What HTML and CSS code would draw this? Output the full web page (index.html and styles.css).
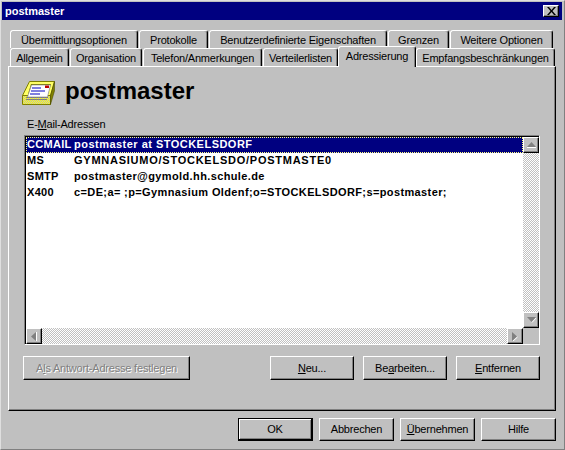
FILE: index.html
```html
<!DOCTYPE html>
<html lang="de">
<head>
<meta charset="utf-8">
<title>postmaster</title>
<link rel="stylesheet" href="styles.css">
</head>
<body>
<div class="window">
  <header class="titlebar">
    <span class="title">postmaster</span>
    <button class="close" aria-label="Schließen"><svg width="9" height="8" viewBox="0 0 9 8"><path d="M0 0h2l2.500 3L7 0h2L5.500 4 9 8H7L4.500 5 2 8H0l3.500-4z" fill="#000"/></svg></button>
  </header>
  <div class="tabs">
    <div class="tab-row">
      <div class="tab w128">Übermittlungsoptionen</div>
      <div class="tab w69">Protokolle</div>
      <div class="tab w178">Benutzerdefinierte Eigenschaften</div>
      <div class="tab w61">Grenzen</div>
      <div class="tab w103">Weitere Optionen</div>
    </div>
    <div class="tab-row">
      <div class="tab w59">Allgemein</div>
      <div class="tab w72">Organisation</div>
      <div class="tab w119">Telefon/Anmerkungen</div>
      <div class="tab w75">Verteilerlisten</div>
      <div class="tab tab-active">Adressierung</div>
      <div class="tab w139">Empfangsbeschränkungen</div>
    </div>
  </div>
  <main class="panel">
    <div class="heading">
      <svg class="mailbox" width="34" height="26" viewBox="0 0 34 26">
        <defs>
          <pattern id="dither" width="2" height="2" patternUnits="userSpaceOnUse">
            <rect width="2" height="2" fill="#ffff00"/>
            <rect width="1" height="1" fill="#c0c0c0"/>
            <rect x="1" y="1" width="1" height="1" fill="#c0c0c0"/>
          </pattern>
        </defs>
        <path d="M8.500 1.500H33.500L29.500 15.500H1.500z" fill="#ffff66" stroke="#808000"/>
        <path d="M1.500 15.500H29.500V24.500H1.500z" fill="url(#dither)" stroke="#808000"/>
        <path d="M29.500 15.500L33.500 1.500V11L29.500 24.500z" fill="#808000" stroke="#404000" stroke-width=".5"/>
        <path d="M10 4H30L27 14H7z" fill="#808000"/>
        <path d="M10.500 5H29.500L26.500 17H6.500z" fill="#fff" stroke="#808080" stroke-width=".6"/>
        <path d="M11 8H20M10 11H24M9 14H19" stroke="#0000c0" stroke-width="1.200"/>
        <path d="M24 5.500H28V8H24z" fill="#c00000"/>
        <path d="M5 17.500H27M5 19.500H26" stroke="#808080"/>
      </svg>
      <h1 class="name">postmaster</h1>
    </div>
    <label class="list-label">E-<u>M</u>ail-Adressen</label>
    <div class="listbox">
      <div class="list-main">
        <div class="list-rows">
          <div class="row row-selected"><span class="kind">CCMAIL</span><span>postmaster at STOCKELSDORF</span></div>
          <div class="row row-upper"><span class="kind">MS</span><span>GYMNASIUMO/STOCKELSDO/POSTMASTE0</span></div>
          <div class="row"><span class="kind">SMTP</span><span>postmaster@gymold.hh.schule.de</span></div>
          <div class="row"><span class="kind">X400</span><span>c=DE;a= ;p=Gymnasium Oldenf;o=STOCKELSDORF;s=postmaster;</span></div>
        </div>
        <div class="vscroll">
          <div class="sbtn"><svg width="9" height="6" viewBox="0 0 9 6"><path d="M4.500 0L9 5H0z" fill="#808080"/><path d="M0 5.500H9" stroke="#fff"/></svg></div>
          <div class="track"></div>
          <div class="sbtn"><svg width="9" height="6" viewBox="0 0 9 6"><path d="M0 0H9L4.500 5z" fill="#808080"/><path d="M5 5.500L9 1" stroke="#fff"/></svg></div>
        </div>
      </div>
      <div class="hscroll">
        <div class="sbtn"><svg width="6" height="9" viewBox="0 0 6 9"><path d="M0 4.500L5 0V9z" fill="#808080"/><path d="M5.500 0V9" stroke="#fff"/></svg></div>
        <div class="track"></div>
        <div class="sbtn"><svg width="6" height="9" viewBox="0 0 6 9"><path d="M0 0L5 4.500 0 9z" fill="#808080"/><path d="M1 9L5.500 5" stroke="#fff"/></svg></div>
        <div class="corner"></div>
      </div>
    </div>
    <div class="actions">
      <button class="btn btn-wide" disabled>A<u>l</u>s Antwort-Adresse festlegen</button>
      <div class="actions-right">
        <button class="btn btn-action"><u>N</u>eu...</button>
        <button class="btn btn-action">Be<u>a</u>rbeiten...</button>
        <button class="btn btn-action"><u>E</u>ntfernen</button>
      </div>
    </div>
  </main>
  <footer class="footer">
    <button class="btn btn-foot btn-default">OK</button>
    <button class="btn btn-foot">Abbrechen</button>
    <button class="btn btn-foot"><u>Ü</u>bernehmen</button>
    <button class="btn btn-foot">Hilfe</button>
  </footer>
</div>
</body>
</html>
```

FILE: styles.css
```css
* { box-sizing: border-box; }
html, body { margin: 0; padding: 0; }
body {
  width: 565px;
  height: 450px;
  overflow: hidden;
  background: #c0c0c0;
  font: 11px/13px "Liberation Sans", Arial, sans-serif;
  color: #000;
}
u { text-decoration: underline; }
.window {
  width: 565px;
  height: 450px;
  display: flex;
  flex-direction: column;
  padding: 1px 2px 0 1px;
  border: 1px solid;
  border-color: #dfdfdf #808080 #808080 #dfdfdf;
}
.titlebar {
  height: 18px;
  flex: none;
  background: #000080;
  color: #fff;
  display: flex;
  align-items: center;
  justify-content: space-between;
  padding: 0 3px 0 3px;
}
.title { font-weight: 700; font-size: 11px; }
.close {
  width: 16px;
  height: 12px;
  padding: 0;
  background: #c0c0c0;
  border: 1px solid;
  border-color: #fff #000 #000 #fff;
  box-shadow: inset -1px -1px 0 #808080;
  display: flex;
  align-items: center;
  justify-content: center;
}
.tabs {
  flex: none;
  margin-top: 10px;
  height: 36px;
  letter-spacing: -.2px;
}
.tab-row { display: flex; height: 18px; padding-left: 8px; gap: 1px; }
.tab {
  height: 18px;
  flex: none;
  display: flex;
  align-items: center;
  justify-content: center;
  background: #c0c0c0;
  border: 1px solid;
  border-bottom: 0;
  border-color: #fff #000 transparent #fff;
  border-radius: 3px 3px 0 0;
  box-shadow: inset -1px 0 0 #808080;
  padding-top: 1px;
}
.w128 { width: 128px; }
.w69 { width: 69px; }
.w178 { width: 178px; }
.w61 { width: 61px; }
.w103 { width: 103px; }
.w59 { width: 59px; }
.w72 { width: 72px; }
.w119 { width: 119px; }
.w75 { width: 75px; margin-right: -1px; }
.w139 { width: 139px; margin-left: -1px; }
.tab-active {
  width: 78px;
  height: 21px;
  margin-top: -2px;
  position: relative;
  z-index: 2;
  padding-bottom: 3px;
}
.panel {
  margin-left: 6px;
  width: 548px;
  height: 345px;
  flex: none;
  background: #c0c0c0;
  border: 1px solid;
  border-color: #fff #000 #000 #fff;
  box-shadow: inset -1px -1px 0 #808080;
  padding: 11px 0 0 15px;
  display: flex;
  flex-direction: column;
}
.heading { display: flex; align-items: center; gap: 10px; height: 28px; margin-left: -3px; }
.mailbox { flex: none; margin-top: 1px; }
.name { margin: -3px 0 0; font: 700 24px/28px "Liberation Sans", Arial, sans-serif; }
.list-label { display: block; margin: 12px 0 0 3px; height: 14px; letter-spacing: -.2px; }
.listbox {
  margin-top: 3px;
  width: 516px;
  height: 210px;
  background: #fff;
  border: 1px solid;
  border-color: #808080 #fff #fff #808080;
  box-shadow: inset 1px 1px 0 #000;
  padding: 1px 0 0 1px;
  display: flex;
  flex-direction: column;
}
.list-main { flex: 1; display: flex; min-height: 0; }
.list-rows { flex: 1; font-weight: 700; letter-spacing: .38px; }
.row { height: 16px; display: flex; line-height: 15px; padding-left: 1px; }
.row-upper { letter-spacing: .75px; }
.row-selected {
  background: #000080;
  color: #fff;
  outline: 1px dotted #ffff80;
  outline-offset: -1px;
  letter-spacing: .48px;
}
.kind { width: 47px; flex: none; letter-spacing: .3px; }
.vscroll { width: 16px; flex: none; display: flex; flex-direction: column; }
.hscroll { height: 16px; flex: none; display: flex; }
.track {
  flex: 1;
  background: repeating-conic-gradient(#c0c0c0 0 25%, #fff 0 50%) 0 0 / 2px 2px;
}
.sbtn {
  width: 16px;
  height: 16px;
  flex: none;
  background: #c0c0c0;
  border: 1px solid;
  border-color: #fff #000 #000 #fff;
  box-shadow: inset -1px -1px 0 #808080;
  display: flex;
  align-items: center;
  justify-content: center;
}
.corner { width: 16px; flex: none; background: #c0c0c0; }
.actions {
  margin-top: 11px;
  display: flex;
  justify-content: space-between;
  width: 517px;
  margin-left: -1px;
}
.actions-right { display: flex; gap: 9px; }
.btn {
  font: 11px/13px "Liberation Sans", Arial, sans-serif;
  letter-spacing: -.2px;
  color: #000;
  background: #c0c0c0;
  border: 1px solid;
  border-color: #fff #000 #000 #fff;
  box-shadow: inset -1px -1px 0 #808080;
  padding: 0;
  height: 24px;
}
.btn-wide { width: 167px; }
.btn-action { width: 84px; }
.btn[disabled] { color: #808080; text-shadow: 1px 1px 0 #fff; }
.footer {
  margin-top: 7px;
  display: flex;
  gap: 6px;
  justify-content: flex-end;
  padding-right: 6px;
}
.btn-foot { width: 75px; height: 23px; }
.btn-default {
  border-color: #000;
  border-width: 1px 2px 2px 1px;
  box-shadow: inset 1px 1px 0 #fff, inset -1px -1px 0 #808080;
}
```
